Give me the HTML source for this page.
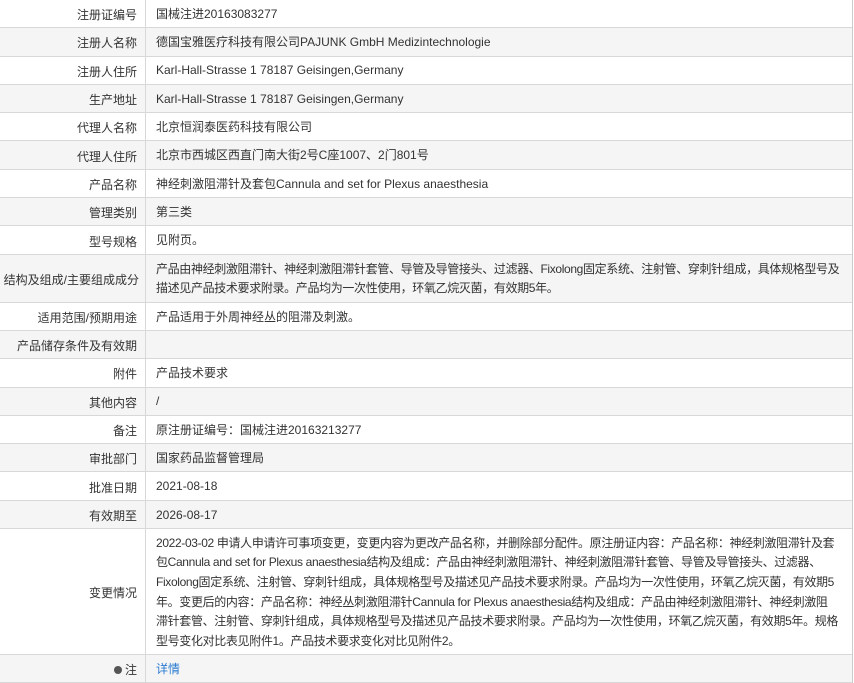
<!DOCTYPE html>
<html><head><meta charset="utf-8"><style>
html,body{margin:0;padding:0;background:#fff;}
body{width:854px;height:674px;overflow:hidden;font-family:"Liberation Sans","Noto Sans CJK SC",sans-serif;font-size:12px;color:#333;}
.t{position:absolute;left:0;top:0;width:852px;border-right:1px solid #ccc;}
.r{display:flex;border-bottom:1px solid #d8d8d8;box-sizing:border-box;height:28.3px;}
.r:nth-child(even){background:#f5f5f5;}
.l{width:146px;flex:none;box-sizing:border-box;border-right:1px solid #d8d8d8;text-align:right;padding-right:8px;display:flex;align-items:center;justify-content:flex-end;white-space:nowrap;padding-top:2px;}
.v{flex:1;padding-left:10px;display:flex;align-items:center;white-space:nowrap;line-height:19.6px;padding-top:2px;}
.s{letter-spacing:-0.35px;}
a{color:#2a7ad2;text-decoration:none;}
</style></head><body>
<div class="t">
<div class="r"><div class="l">注册证编号</div><div class="v">国械注进20163083277</div></div>
<div class="r"><div class="l">注册人名称</div><div class="v">德国宝雅医疗科技有限公司PAJUNK GmbH Medizintechnologie</div></div>
<div class="r"><div class="l">注册人住所</div><div class="v">Karl-Hall-Strasse 1 78187 Geisingen,Germany</div></div>
<div class="r"><div class="l">生产地址</div><div class="v">Karl-Hall-Strasse 1 78187 Geisingen,Germany</div></div>
<div class="r"><div class="l">代理人名称</div><div class="v">北京恒润泰医药科技有限公司</div></div>
<div class="r"><div class="l">代理人住所</div><div class="v">北京市西城区西直门南大街2号C座1007、2门801号</div></div>
<div class="r"><div class="l">产品名称</div><div class="v">神经刺激阻滞针及套包Cannula and set for Plexus anaesthesia</div></div>
<div class="r"><div class="l">管理类别</div><div class="v">第三类</div></div>
<div class="r"><div class="l">型号规格</div><div class="v">见附页。</div></div>
<div class="r" style="height:48px"><div class="l" style="padding-right:6px">结构及组成/主要组成成分</div><div class="v s">产品由神经刺激阻滞针、神经刺激阻滞针套管、导管及导管接头、过滤器、Fixolong固定系统、注射管、穿刺针组成，具体规格型号及<br>描述见产品技术要求附录。产品均为一次性使用，环氧乙烷灭菌，有效期5年。</div></div>
<div class="r"><div class="l">适用范围/预期用途</div><div class="v">产品适用于外周神经丛的阻滞及刺激。</div></div>
<div class="r"><div class="l">产品储存条件及有效期</div><div class="v"></div></div>
<div class="r"><div class="l">附件</div><div class="v">产品技术要求</div></div>
<div class="r"><div class="l">其他内容</div><div class="v">/</div></div>
<div class="r"><div class="l">备注</div><div class="v">原注册证编号：国械注进20163213277</div></div>
<div class="r"><div class="l">审批部门</div><div class="v">国家药品监督管理局</div></div>
<div class="r"><div class="l">批准日期</div><div class="v">2021-08-18</div></div>
<div class="r"><div class="l">有效期至</div><div class="v">2026-08-17</div></div>
<div class="r" style="height:126px"><div class="l">变更情况</div><div class="v s">2022-03-02 申请人申请许可事项变更，变更内容为更改产品名称，并删除部分配件。原注册证内容：产品名称：神经刺激阻滞针及套<br>包Cannula and set for Plexus anaesthesia结构及组成：产品由神经刺激阻滞针、神经刺激阻滞针套管、导管及导管接头、过滤器、<br>Fixolong固定系统、注射管、穿刺针组成，具体规格型号及描述见产品技术要求附录。产品均为一次性使用，环氧乙烷灭菌，有效期5<br>年。变更后的内容：产品名称：神经丛刺激阻滞针Cannula for Plexus anaesthesia结构及组成：产品由神经刺激阻滞针、神经刺激阻<br>滞针套管、注射管、穿刺针组成，具体规格型号及描述见产品技术要求附录。产品均为一次性使用，环氧乙烷灭菌，有效期5年。规格<br>型号变化对比表见附件1。产品技术要求变化对比见附件2。</div></div>
<div class="r"><div class="l"><span style="display:inline-block;width:8px;height:8px;border-radius:50%;background:#555;margin-right:3px"></span>注</div><div class="v"><a>详情</a></div></div>
</div>
</body></html>
